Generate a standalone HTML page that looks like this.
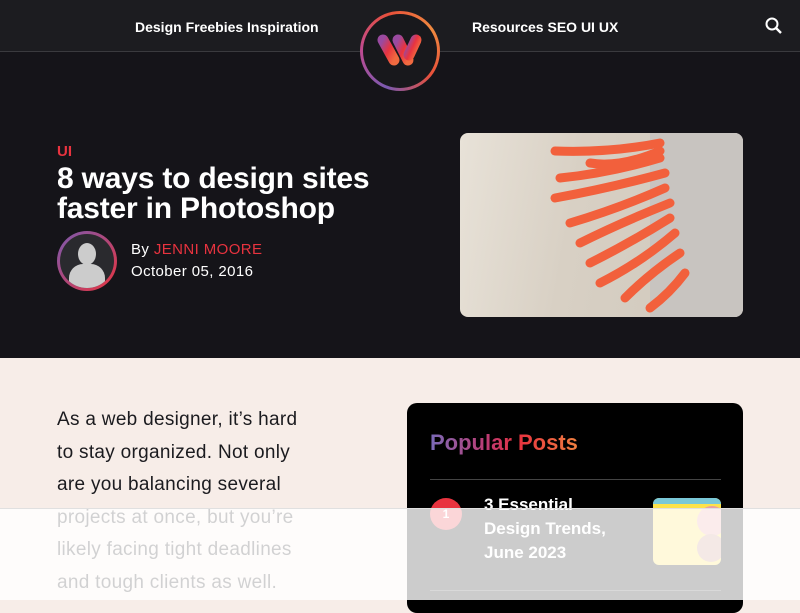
<!DOCTYPE html>
<html><head><meta charset="utf-8"><style>
*{margin:0;padding:0;box-sizing:border-box}
body{width:800px;height:600px;overflow:hidden;font-family:"Liberation Sans",sans-serif;background:#f7ede8;position:relative}
.nav{position:absolute;top:0;left:0;width:800px;height:52px;background:#1c1c20;border-bottom:1px solid #3a3a3e}
.nav span{position:absolute;top:19px;color:#fff;font-weight:bold;font-size:14px}
.hero{position:absolute;top:52px;left:0;width:800px;height:306px;background:#151419}
.logo{position:absolute;left:360px;top:11px;width:80px;height:80px;border-radius:50%;background:conic-gradient(from 200deg,#7a5ab0,#c04a90,#e8503a,#f08a40,#e8503a,#7a5ab0);padding:3px}
.logo div{width:100%;height:100%;border-radius:50%;background:#18181c;position:relative}
.cat{position:absolute;left:57px;top:143px;color:#e8333f;font-weight:bold;font-size:15px}
h1{position:absolute;left:57px;top:164px;color:#fff;font-size:30px;line-height:30px;font-weight:bold;letter-spacing:-0.2px}
.av{position:absolute;left:57px;top:231px;width:60px;height:60px;border-radius:50%;background:linear-gradient(135deg,#7a5ab0,#e8333f);padding:3px}
.av div{width:100%;height:100%;border-radius:50%;background:#2a2a2e;overflow:hidden;position:relative}
.by{position:absolute;left:131px;top:241px;color:#fff;font-size:15px;letter-spacing:.4px}
.by b{color:#e8333f;font-weight:normal}
.date{position:absolute;left:131px;top:263px;color:#fff;font-size:15px;letter-spacing:.4px}
.img{position:absolute;left:460px;top:133px;width:283px;height:184px;border-radius:8px;background:linear-gradient(100deg,#e8e2d8,#d8d0c4 40%,#cfc8bc);overflow:hidden}
.body{position:absolute;left:57px;top:404px;width:250px;font-size:19px;line-height:32.6px;color:#1b1b1f;letter-spacing:.3px}
.card{position:absolute;left:407px;top:403px;width:336px;height:210px;background:#000;border-radius:10px}
.card h2{position:absolute;left:23px;top:27px;font-size:22px;background:linear-gradient(90deg,#7a6ab8,#c03a70 40%,#e8333f 60%,#f08040);-webkit-background-clip:text;color:transparent}
.line{position:absolute;left:23px;width:291px;height:1px;background:#444}
.num{position:absolute;left:23px;top:95px;width:32px;height:32px;border-radius:50%;background:#e8333f;color:#fff;font-size:12px;text-align:center;line-height:32px;font-weight:bold}
.pt{position:absolute;left:77px;top:90px;color:#fff;font-weight:bold;font-size:17px;line-height:24px}
.th{position:absolute;left:246px;top:95px;width:68px;height:67px;border-radius:6px;background:#fde24a;overflow:hidden}
.ov{position:absolute;left:0;top:508px;width:800px;height:92px;background:rgba(255,255,255,0.8);border-top:1px solid #e0e0e0}
</style></head><body>
<div class="nav"><span style="left:135px">Design Freebies Inspiration</span><span style="left:472px">Resources SEO UI UX</span>
<svg style="position:absolute;left:764px;top:16px" width="20" height="20" viewBox="0 0 20 20"><circle cx="8" cy="8" r="5.5" stroke="#fff" stroke-width="2" fill="none"/><path d="M12 12l5 5" stroke="#fff" stroke-width="2.4"/></svg></div>
<div class="hero"></div>
<div class="logo"><div><svg style="position:absolute;left:0;top:0" width="74" height="74" viewBox="0 0 74 74"><defs><linearGradient id="g" x1="0" y1="0" x2="1" y2="1"><stop offset="0" stop-color="#9a4aa0"/><stop offset=".5" stop-color="#e8333f"/><stop offset="1" stop-color="#f06a40"/></linearGradient></defs><g stroke="url(#g)" stroke-width="11" stroke-linecap="round" fill="none"><path d="M20 26 L31 46"/><path d="M35 26 L45 46"/><path d="M53 26 L46 41"/></g></svg></div></div>
<div class="cat">UI</div>
<h1>8 ways to design sites<br>faster in Photoshop</h1>
<div class="av"><div><div style="position:absolute;left:18px;top:9px;width:18px;height:22px;border-radius:50%;background:#ccc"></div><div style="position:absolute;left:9px;top:30px;width:36px;height:24px;border-radius:14px 14px 0 0;background:#ccc"></div></div></div>
<div class="by">By <b>JENNI MOORE</b></div>
<div class="date">October 05, 2016</div>
<div class="img">
<svg width="283" height="184" viewBox="0 0 283 184"><rect x="190" y="0" width="93" height="184" fill="#c8c4c0"/><g stroke="#f2603c" stroke-width="9" fill="none" stroke-linecap="round">
<path d="M200 10 Q150 20 95 18"/><path d="M200 25 Q150 40 100 45"/><path d="M205 40 Q150 55 95 65"/><path d="M205 55 Q160 75 110 90"/><path d="M210 70 Q160 90 120 110"/><path d="M210 85 Q170 110 130 130"/><path d="M215 100 Q180 130 140 150"/><path d="M220 120 Q190 140 165 165"/><path d="M225 140 Q210 160 190 175"/><path d="M200 18 Q160 35 130 30"/></g></svg></div>
<div class="body">As a web designer, it’s hard to stay organized. Not only are you balancing several projects at once, but you’re likely facing tight deadlines and tough clients as well.</div>
<div class="card"><h2>Popular Posts</h2><div class="line" style="top:76px"></div>
<div class="num">1</div><div class="pt">3 Essential<br>Design Trends,<br>June 2023</div>
<div class="th"><div style="position:absolute;right:-6px;top:8px;width:30px;height:30px;border-radius:50%;background:#e8a0a0"></div><div style="position:absolute;right:-4px;top:36px;width:28px;height:28px;border-radius:50%;background:#c89080"></div><div style="position:absolute;left:0;top:0;width:68px;height:6px;background:#7ac8d8"></div></div>
<div class="line" style="top:187px"></div></div>
<div class="ov"></div>
</body></html>
